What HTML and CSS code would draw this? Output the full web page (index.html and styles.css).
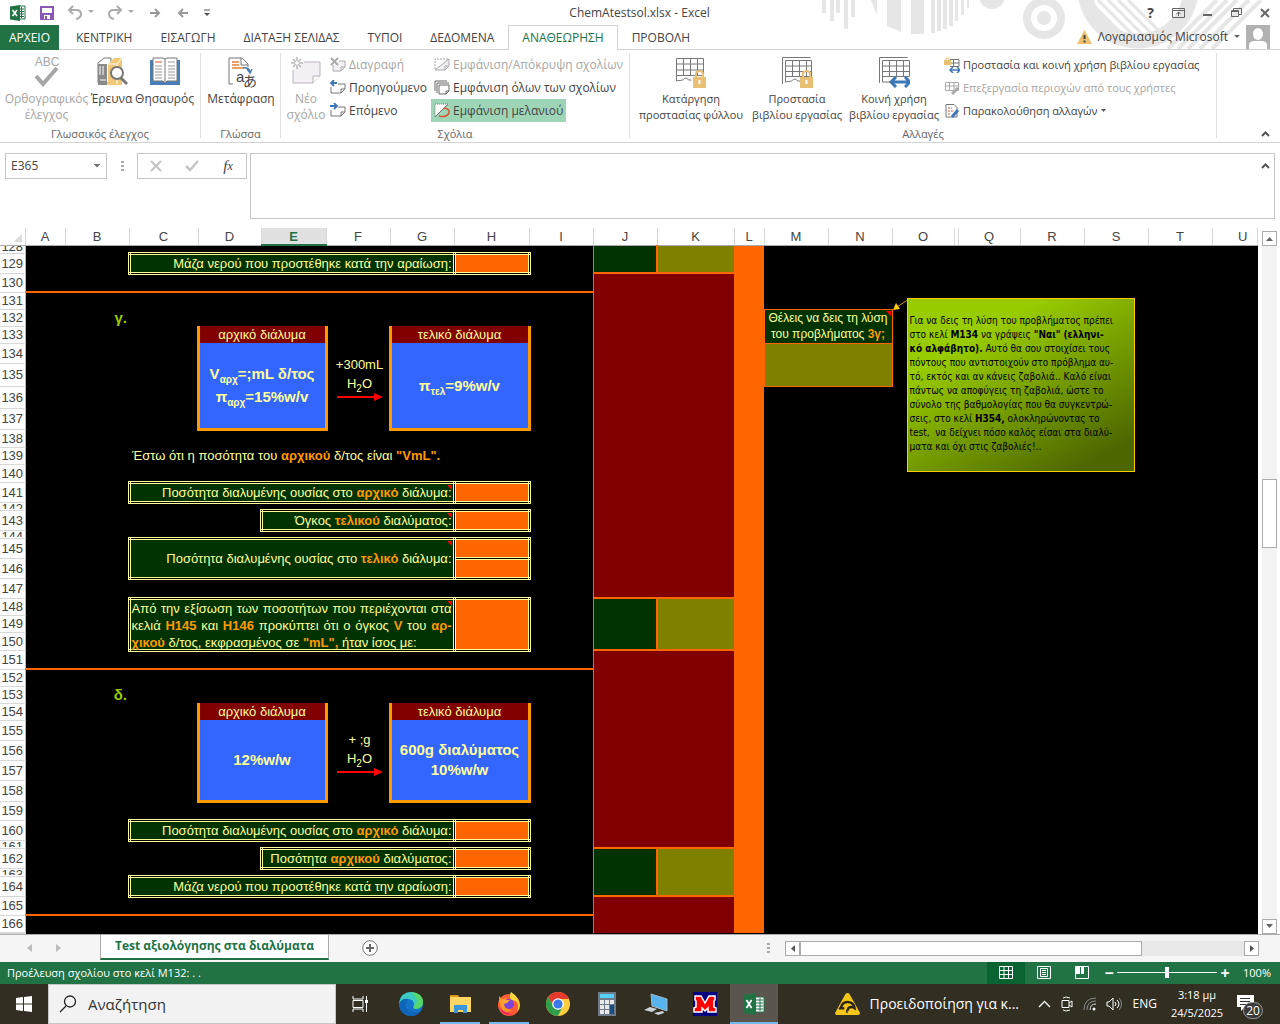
FILE: index.html
```html
<!DOCTYPE html>
<html lang="el">
<head>
    <meta charset="UTF-8">
    <meta name="viewport" content="width=device-width, initial-scale=1.0">
    <title>ChemAtestsol.xlsx - Excel</title>
    <link rel="stylesheet" href="styles.css">
</head>
<body>

    <!-- Title bar -->
    <header class="top">
        <svg class="decor" width="460" height="49" viewBox="0 0 460 49">
            <path fill="#e6e6e6" d="M2 0h4v13h-4zM10 0h4v21h-4zM16 0h4v13h-4zM24 0h4v29h-4zM31 0h4v17h-4zM51 0h6v15zM67 0h14v32l-14-6zM91 0h13v34h-13zM111 0h4v33h-4zM117 0h4v31h-4zM123 0h4v29h-4zM129 0h4v26h-4zM135 0h3v21h-3zM141 0h3v15h-3zM147 0h2v8h-2z"/>
            <circle cx="172" cy="-4" r="13" fill="#e6e6e6"/>
            <circle cx="224" cy="18" r="17" fill="none" stroke="#e6e6e6" stroke-width="8"/>
            <circle cx="224" cy="18" r="7" fill="#e6e6e6"/>
            <path d="M268 0l38 38M278 0l38 38M288 0l38 38M298 0l36 36M308 0l34 34" stroke="#e6e6e6" stroke-width="3"/>
            <circle cx="318" cy="-12" r="53" fill="none" stroke="#e6e6e6" stroke-width="15"/>
            <path d="M348 49l49-49M358 49l49-49M376 21l21-21M368 49l49-49M380 49l49-49M392 49l49-49" stroke="#e6e6e6" stroke-width="4"/>
        </svg>
        <div class="titlebar">
            <div class="quick">
                <button class="ico"><svg width="18" height="18" viewBox="0 0 18 18"><path d="M9 2h7v13H9z" fill="#fff" stroke="#217346"/><path d="M10 5h5M10 7.500h5M10 10h5M10 12.500h5M12.500 3v11" stroke="#217346"/><path d="M1 2.500L11 1v16L1 15.500z" fill="#217346"/><path d="M3.500 6l4.500 6M8 6l-4.500 6" stroke="#fff" stroke-width="1.600"/></svg></button>
                <button class="ico"><svg width="16" height="16" viewBox="0 0 16 16"><path d="M2 2h12v12H2z" fill="#fff" stroke="#8a57b5" stroke-width="2"/><path d="M2 8h12v6H2z" fill="#8a57b5"/><path d="M5 10h6v4H5z" fill="#fff"/><path d="M6 11h2v3H6z" fill="#8a57b5"/></svg></button>
                <button class="ico"><svg width="28" height="16" viewBox="0 0 28 16"><path d="M6 1L2 5l4 4M2 5h7q5 0 5 4t-5 5" fill="none" stroke="#ababab" stroke-width="2"/><path d="M21 5h6l-3 3z" fill="#ababab"/></svg></button>
                <button class="ico"><svg width="28" height="16" viewBox="0 0 28 16"><path d="M10 1l4 4-4 4M14 5H7Q2 5 2 9t5 5" fill="none" stroke="#ababab" stroke-width="2"/><path d="M21 5h6l-3 3z" fill="#ababab"/></svg></button>
                <button class="ico step-next"><svg width="12" height="12" viewBox="0 0 12 12"><path d="M1 6h9M6 2l4 4-4 4" fill="none" stroke="#999" stroke-width="2"/></svg></button>
                <button class="ico step-back"><svg width="12" height="12" viewBox="0 0 12 12"><path d="M11 6H2M6 2L2 6l4 4" fill="none" stroke="#999" stroke-width="2"/></svg></button>
                <button class="ico"><svg width="8" height="8" viewBox="0 0 8 8"><path d="M1 1h6" stroke="#555"/><path d="M1 4h6L4 7z" fill="#555"/></svg></button>
            </div>
            <div class="doc-title">ChemAtestsol.xlsx - Excel</div>
            <div class="window-buttons">
                <button class="help">?</button>
                <button><svg width="13" height="10" viewBox="0 0 13 10"><path d="M.5.5h12v9H.5zM1 2.500h11" fill="none" stroke="#666"/><path d="M6.500 8V4M4.500 6l2-2 2 2" fill="none" stroke="#666"/></svg></button>
                <button><svg width="10" height="10" viewBox="0 0 10 10"><path d="M0 7h9" stroke="#666" stroke-width="2"/></svg></button>
                <button><svg width="11" height="10" viewBox="0 0 11 10"><path d="M2.500 2V.5h8v6H8M.5 2.500h7v6h-7zM.5 3.500h7" fill="none" stroke="#666"/></svg></button>
                <button><svg width="10" height="10" viewBox="0 0 10 10"><path d="M1 1l8 8M9 1L1 9" stroke="#666" stroke-width="2"/></svg></button>
            </div>
        </div>

        <nav class="tabs">
            <button class="tab file">ΑΡΧΕΙΟ</button>
            <button class="tab">ΚΕΝΤΡΙΚΗ</button>
            <button class="tab">ΕΙΣΑΓΩΓΗ</button>
            <button class="tab">ΔΙΑΤΑΞΗ ΣΕΛΙΔΑΣ</button>
            <button class="tab">ΤΥΠΟΙ</button>
            <button class="tab">ΔΕΔΟΜΕΝΑ</button>
            <button class="tab active">ΑΝΑΘΕΩΡΗΣΗ</button>
            <button class="tab">ΠΡΟΒΟΛΗ</button>
            <button class="account">
                <svg width="15" height="14" viewBox="0 0 15 14"><path d="M7.500 0L15 14H0z" fill="#edc071"/><path d="M7.500 5v4M7.500 10.500v2" stroke="#444" stroke-width="2"/></svg>
                <span>Λογαριασμός Microsoft</span>
                <svg width="6" height="4" viewBox="0 0 6 4"><path d="M0 0h6L3 3z" fill="#666"/></svg>
                <svg class="avatar" width="24" height="24" viewBox="0 0 24 24"><path d="M0 0h24v24H0z" fill="#b1b1b1"/><ellipse cx="12" cy="9" rx="5" ry="6" fill="#fff"/><path d="M3 24v-4q0-4 6-4h6q6 0 6 4v4z" fill="#fff"/></svg>
            </button>
        </nav>
    </header>

    <!-- Ribbon -->
    <section class="ribbon">
        <div class="group group-proof">
            <div class="tools">
                <button class="big off b-spell">
                    <svg width="32" height="32" viewBox="0 0 32 32"><text x="16" y="10" text-anchor="middle" font-family="Liberation Sans" font-size="12" fill="#a6a6a6">ABC</text><path d="M5 20l7 8L26 12" fill="none" stroke="#a6a6a6" stroke-width="4"/></svg>
                    Ορθογραφικός<br>έλεγχος</button>
                <button class="big b-find">
                    <svg width="32" height="32" viewBox="0 0 32 32"><path d="M2 7l6-5h7v25H2z" fill="#fff" stroke="#7b7b7b"/><path d="M2 8h9v21H2z" fill="#8a8a8a"/><path d="M4 10v9M7 10v9M4 24h6" stroke="#fff"/><path d="M12 8l6-6h8v27H12z" fill="#f0c878"/><path d="M12 8h9l5-6M21 8v20" stroke="#fff" fill="none"/><circle cx="21" cy="17" r="6" fill="#fff" stroke="#777" stroke-width="2"/><path d="M25 22l6 6" stroke="#777" stroke-width="3"/></svg>
                    Έρευνα</button>
                <button class="big b-thes">
                    <svg width="32" height="32" viewBox="0 0 32 32"><path d="M1 4h30v25H1z" fill="#4a7ebb"/><path d="M4 2h10l2 1 2-1h10v23H18l-2 2-2-2H4z" fill="#fff" stroke="#777"/><path d="M16 3v24" stroke="#777"/><path d="M6 6h7" stroke="#d9532c"/><path d="M6 10h7M6 13h7M6 16h7M6 19h7M6 22h7M19 6h7M19 10h7M19 13h7M19 16h7M19 19h7M19 22h7" stroke="#999"/></svg>
                    Θησαυρός</button>
            </div>
            <div class="caption">Γλωσσικός έλεγχος</div>
        </div>
        <div class="group group-lang">
            <div class="tools">
                <button class="big b-lang">
                    <svg width="32" height="32" viewBox="0 0 32 32"><path d="M8 28H4V2h13l6 6v3M16 2v7h7" fill="none" stroke="#777"/><path d="M7 6h7M7 9h7M7 12h12" stroke="#e8833a" stroke-width="1.500"/><path d="M18 12q6-1 7 4M22 13l3 4 2-4" fill="none" stroke="#4a7ebb" stroke-width="1.500"/><text x="11" y="26" font-family="Liberation Sans" font-size="15" fill="#444">a</text><text x="18" y="30" font-family="Noto Sans CJK JP" font-size="14" fill="#444">あ</text></svg>
                    Μετάφραση</button>
            </div>
            <div class="caption">Γλώσσα</div>
        </div>
        <div class="group group-notes">
            <div class="tools">
                <button class="big off b-new">
                    <svg width="32" height="32" viewBox="0 0 32 32"><path d="M3 14v13h20l7-7V6H14" fill="#f3f0f5" stroke="#b9b4bb"/><path d="M23 27v-7h7" fill="#fff" stroke="#b9b4bb"/><path d="M7 1v4M7 9v4M1 7h4M9 7h4M3 3l3 3M8 8l3 3M11 3L8 6M6 8l-3 3" stroke="#bbb" stroke-width="1.500"/></svg>
                    Νέο<br>σχόλιο</button>
                <div class="stack nav">
                    <button class="small off"><svg width="16" height="16" viewBox="0 0 16 16"><path d="M3 8v6h8l4-4V4H9" fill="#f3f0f5" stroke="#aaa"/><path d="M11 14v-4h4" fill="none" stroke="#aaa"/><path d="M1 1l7 7M8 1L1 8" stroke="#aaa" stroke-width="2"/></svg>Διαγραφή</button>
                    <button class="small"><svg width="16" height="16" viewBox="0 0 16 16"><path d="M1 7v6h10l4-4V4H8" fill="none" stroke="#777"/><path d="M11 13V9h4" fill="none" stroke="#777"/><path d="M7 3H1M4 0L1 3l3 3" fill="none" stroke="#3f78b8" stroke-width="1.800"/></svg>Προηγούμενο</button>
                    <button class="small"><svg width="16" height="16" viewBox="0 0 16 16"><path d="M1 7v6h10l4-4V4H8" fill="none" stroke="#777"/><path d="M11 13V9h4" fill="none" stroke="#777"/><path d="M0 3h6M4 0l3 3-3 3" fill="none" stroke="#3f78b8" stroke-width="1.800"/></svg>Επόμενο</button>
                </div>
                <div class="stack">
                    <button class="small off"><svg width="16" height="16" viewBox="0 0 16 16"><path d="M1 12V2h14" fill="none" stroke="#aaa" stroke-dasharray="2 1"/><path d="M15 2v7l-4 4H1z" fill="#f3f0f5" stroke="#aaa"/><path d="M11 13V9h4" fill="none" stroke="#aaa"/></svg>Εμφάνιση/Απόκρυψη σχολίων</button>
                    <button class="small"><svg width="16" height="16" viewBox="0 0 16 16"><path d="M1 11V1h12M3 13V3h12M5 5h10v6l-3 3H5zM12 14v-3h3" fill="none" stroke="#666"/></svg>Εμφάνιση όλων των σχολίων</button>
                    <button class="small picked"><svg width="16" height="16" viewBox="0 0 16 16"><path d="M1 1h13L1 14z" fill="#fff" stroke="#777" stroke-dasharray="1 1"/><path d="M14 1L1 14" stroke="#666"/><path d="M10 5q6 1 5 5-3 5-10 3" fill="none" stroke="#d9532c" stroke-width="1.500"/></svg>Εμφάνιση μελανιού</button>
                </div>
            </div>
            <div class="caption">Σχόλια</div>
        </div>
        <div class="group group-changes">
            <div class="tools">
                <button class="big b-sheet">
                    <svg width="32" height="32" viewBox="0 0 32 32"><path d="M1.500 2.500h27v17h-27zM1.500 8h27M1.500 14h27M8.500 2v18M15.500 2v18M22.500 2v18M1.500 20v5l6-1q4-4 6 0h3" fill="none" stroke="#777"/><path d="M21 21v-3q0-3 3.500-3t3.500 3v3" fill="none" stroke="#e8bf73" stroke-width="2"/><path d="M18 21h13v11H18z" fill="#e8bf73"/><path d="M24.500 24v4" stroke="#fff" stroke-width="2"/></svg>
                    Κατάργηση<br>προστασίας φύλλου</button>
                <button class="big b-book">
                    <svg width="32" height="32" viewBox="0 0 32 32"><path d="M1.500 28V1.500h28M4.500 4.500h26v16h-26zM4.500 10h26M4.500 15.500h26M11.500 4v17M18.500 4v17M25.500 4v17M4.500 20v6l6-1q4-4 6 0h3" fill="none" stroke="#777"/><path d="M22 21v-3q0-3 3.500-3t3.500 3v3" fill="none" stroke="#e8bf73" stroke-width="2"/><path d="M19 21h13v11H19z" fill="#e8bf73"/><path d="M25.500 24v4" stroke="#fff" stroke-width="2"/></svg>
                    Προστασία<br>βιβλίου εργασίας</button>
                <button class="big b-share">
                    <svg width="32" height="32" viewBox="0 0 32 32"><path d="M1.500 27V1.500h28M4.500 4.500h27v16h-27zM4.500 10h27M4.500 15.500h27M11.500 4v17M18.500 4v17M25.500 4v17M4.500 20v6h8" fill="none" stroke="#777"/><path d="M14 26h17M18 21l-5 5 5 5M27 21l5 5-5 5" fill="none" stroke="#3f78b8" stroke-width="3"/></svg>
                    Κοινή χρήση<br>βιβλίου εργασίας</button>
                <div class="stack">
                    <button class="small"><svg width="16" height="16" viewBox="0 0 16 16"><path d="M6 2.500h9v7H6M6 6h9M9.500 2v8" fill="none" stroke="#777"/><path d="M0 3h7v5H0z" fill="#e8bf73"/><path d="M2 3V1h3v2" fill="none" stroke="#e8bf73"/><path d="M7 13h8M9 10l-3 3 3 3M13 10l3 3-3 3" fill="none" stroke="#3f78b8" stroke-width="1.500"/></svg>Προστασία και κοινή χρήση βιβλίου εργασίας</button>
                    <button class="small off"><svg width="16" height="16" viewBox="0 0 16 16"><path d="M1.500 2.500h13v8h-13zM1 6h13M5.500 2v8M10 2v8" fill="none" stroke="#aaa"/><path d="M8 14l6-6" stroke="#aaa" stroke-width="3"/></svg>Επεξεργασία περιοχών από τους χρήστες</button>
                    <button class="small"><svg width="16" height="16" viewBox="0 0 16 16"><path d="M2 1.500h8l3 3V14H2z" fill="#fff" stroke="#777"/><path d="M4 5h4M4 8h5M4 11h3" stroke="#d9532c" stroke-dasharray="2 1"/><path d="M8 14l6-7" stroke="#3f78b8" stroke-width="3"/></svg>Παρακολούθηση αλλαγών<svg class="drop" width="5" height="3" viewBox="0 0 5 3"><path d="M0 0h5L2.500 3z" fill="#555"/></svg></button>
                </div>
            </div>
            <div class="caption">Αλλαγές</div>
        </div>
        <button class="collapse"><svg width="9" height="6" viewBox="0 0 9 6"><path d="M1 5l3.500-3.500L8 5" fill="none" stroke="#555" stroke-width="2"/></svg></button>
    </section>

    <!-- Formula bar -->
    <section class="formula-bar">
        <select class="name-box" aria-label="Πλαίσιο ονόματος"><option>E365</option></select>
        <span class="dots"></span>
        <div class="fx-box">
            <button><svg width="12" height="12" viewBox="0 0 12 12"><path d="M1 1l10 10M11 1L1 11" stroke="#c4c4c4" stroke-width="2"/></svg></button>
            <button><svg width="14" height="12" viewBox="0 0 14 12"><path d="M1 6l4 4 8-9" fill="none" stroke="#c4c4c4" stroke-width="2.500"/></svg></button>
            <button class="fx">f<small>x</small></button>
        </div>
        <div class="formula">
            <textarea aria-label="Γραμμή τύπων"></textarea>
            <svg width="9" height="6" viewBox="0 0 9 6"><path d="M1 5l3.500-3.500L8 5" fill="none" stroke="#555" stroke-width="2"/></svg>
        </div>
    </section>

    <!-- Worksheet -->
    <main class="work">
        <table class="sheet">
            <colgroup>
                <col class="c-head"><col class="c-a"><col class="c-64"><col class="c-c"><col class="c-63"><col class="c-e">
                <col class="c-64"><col class="c-64"><col class="c-h"><col class="c-64"><col class="c-64"><col class="c-k"><col class="c-l">
                <col class="c-64"><col class="c-64"><col class="c-62"><col class="c-p"><col class="c-62"><col class="c-64"><col class="c-64"><col class="c-64"><col>
            </colgroup>
            <thead>
                <tr>
                    <th class="corner"></th><th>A</th><th>B</th><th>C</th><th>D</th><th class="current">E</th><th>F</th><th>G</th><th>H</th><th>I</th><th>J</th><th>K</th><th>L</th><th>M</th><th>N</th><th>O</th><th></th><th>Q</th><th>R</th><th>S</th><th>T</th><th class="last">U</th>
                </tr>
            </thead>
            <tbody>
                <tr class="r8"><th class="cut-top"><div>128</div></th><td colspan="4"></td><td colspan="4" class="box-end"></td><td></td>
                    <td rowspan="2" class="green score"></td><td rowspan="2" class="olive score"></td><td rowspan="40" class="stripe"></td><td colspan="9" rowspan="4"></td></tr>
                <tr class="r20"><th>129</th><td colspan="2"></td><td colspan="5" class="ask">Μάζα νερού που προστέθηκε κατά την αραίωση:</td><td class="answer"></td><td></td></tr>
                <tr class="r19"><th>130</th><td colspan="9" class="rule"></td><td colspan="2" rowspan="18" class="maroon"></td></tr>
                <tr class="r17"><th>131</th><td colspan="9"></td></tr>
                <tr class="r17"><th>132</th><td></td><td class="part">γ.</td><td colspan="7"></td>
                    <td colspan="2" rowspan="2" class="hint"><i class="mark"></i>Θέλεις να δεις τη λύση<br>του προβλήματος <b>3γ;</b></td>
                    <td colspan="7" rowspan="36" class="free">
                        <svg class="pointer" width="17" height="13" viewBox="0 0 17 13"><path d="M16 1L4 9" stroke="#c90" /><path d="M0 12l3-7 4 6z" fill="#fc0"/></svg>
                        <div class="note">Για να δεις τη λύση του προβλήματος πρέπει<br>στο κελί <b>M134</b> να γράψεις <b>"Ναι" (ελληνι-<br>κό αλφάβητο).</b> Αυτό θα σου στοιχίσει τους<br>πόντους που αντιστοιχούν στο πρόβλημα αυ-<br>τό, εκτός και αν κάνεις ζαβολιά.. Καλό είναι<br>πάντως να αποφύγεις τη ζαβολιά, ώστε το<br>σύνολο της βαθμολογίας που θα συγκεντρώ-<br>σεις, στο κελί <b>H354,</b> ολοκληρώνοντας το<br>test,&nbsp; να δείχνει πόσο καλός είσαι στα διαλύ-<br>ματα και όχι στις ζαβολιές!..</div>
                    </td></tr>
                <tr class="r17"><th>133</th><td colspan="3"></td><td colspan="2" class="jar-top">αρχικό διάλυμα</td><td></td><td colspan="2" class="jar-top">τελικό διάλυμα</td><td></td></tr>
                <tr class="r20"><th>134</th><td colspan="3" rowspan="4"></td>
                    <td colspan="2" rowspan="4" class="jar">V<sub>αρχ</sub>=;mL δ/τος<br>π<sub>αρχ</sub>=15%w/v</td>
                    <td rowspan="4" class="add">+300mL<br>H<sub>2</sub>O<svg width="46" height="9" viewBox="0 0 46 9"><path d="M0 4h38" stroke="red" stroke-width="2"/><path d="M37 0l9 4-9 4z" fill="red"/></svg></td>
                    <td colspan="2" rowspan="4" class="jar">π<sub>τελ</sub>=9%w/v</td><td rowspan="4"></td>
                    <td colspan="2" rowspan="2" class="olive framed"></td></tr>
                <tr class="r23"><th>135</th></tr>
                <tr class="r22"><th>136</th><td colspan="2" rowspan="32"></td></tr>
                <tr class="r21"><th>137</th></tr>
                <tr class="r18"><th>138</th><td colspan="9"></td></tr>
                <tr class="r17"><th>139</th><td colspan="2"></td><td colspan="7" class="say">Έστω ότι η ποσότητα του <b>αρχικού</b> δ/τος είναι <b>"VmL".</b></td></tr>
                <tr class="r18"><th>140</th><td colspan="9"></td></tr>
                <tr class="r20"><th>141</th><td colspan="2"></td><td colspan="5" class="ask"><i class="mark"></i>Ποσότητα διαλυμένης ουσίας στο <b>αρχικό</b> διάλυμα:</td><td class="answer"></td><td></td></tr>
                <tr class="r8"><th class="cut"><div>142</div></th><td colspan="9"></td></tr>
                <tr class="r20"><th>143</th><td colspan="4"></td><td colspan="3" class="ask"><i class="mark"></i>Όγκος <b>τελικού</b> διαλύματος:</td><td class="answer"></td><td></td></tr>
                <tr class="r8"><th class="cut"><div>144</div></th><td colspan="9"></td></tr>
                <tr class="r20"><th>145</th><td colspan="2" rowspan="2"></td><td colspan="5" rowspan="2" class="ask"><i class="mark"></i>Ποσότητα διαλυμένης ουσίας στο <b>τελικό</b> διάλυμα:</td><td class="answer"></td><td rowspan="2"></td></tr>
                <tr class="r20"><th>146</th><td class="answer"></td></tr>
                <tr class="r20"><th>147</th><td colspan="9"></td></tr>
                <tr class="r17"><th>148</th><td colspan="2" rowspan="3"></td>
                    <td colspan="5" rowspan="3" class="ask long"><i class="mark"></i><p>Από την εξίσωση των ποσοτήτων που περιέχονται στα</p><p>κελιά <b>H145</b> και <b>H146</b> προκύπτει ότι ο όγκος <b>V</b> του <b>αρ-</b></p><p class="end"><b>χικού</b> δ/τος, εκφρασμένος σε <b>"mL",</b> ήταν ίσος με:</p></td>
                    <td rowspan="3" class="answer"></td><td rowspan="3"></td><td rowspan="3" class="green score"></td><td rowspan="3" class="olive score"></td></tr>
                <tr class="r17"><th>149</th></tr>
                <tr class="r18"><th>150</th></tr>
                <tr class="r19"><th>151</th><td colspan="9" class="rule"></td><td colspan="2" rowspan="11" class="maroon"></td></tr>
                <tr class="r17"><th>152</th><td colspan="9"></td></tr>
                <tr class="r17"><th>153</th><td></td><td class="part">δ.</td><td colspan="7"></td></tr>
                <tr class="r17"><th>154</th><td colspan="3"></td><td colspan="2" class="jar-top">αρχικό διάλυμα</td><td></td><td colspan="2" class="jar-top">τελικό διάλυμα</td><td></td></tr>
                <tr class="r20"><th>155</th><td colspan="3" rowspan="4"></td>
                    <td colspan="2" rowspan="4" class="jar">12%w/w</td>
                    <td rowspan="4" class="add">+ ;g<br>H<sub>2</sub>O<svg width="46" height="9" viewBox="0 0 46 9"><path d="M0 4h38" stroke="red" stroke-width="2"/><path d="M37 0l9 4-9 4z" fill="red"/></svg></td>
                    <td colspan="2" rowspan="4" class="jar tight">600g διαλύματος<br>10%w/w</td><td rowspan="4"></td></tr>
                <tr class="r20"><th>156</th></tr>
                <tr class="r20"><th>157</th></tr>
                <tr class="r21"><th>158</th></tr>
                <tr class="r19"><th>159</th><td colspan="9"></td></tr>
                <tr class="r20"><th>160</th><td colspan="2"></td><td colspan="5" class="ask">Ποσότητα διαλυμένης ουσίας στο <b>αρχικό</b> διάλυμα:</td><td class="answer"></td><td></td></tr>
                <tr class="r8"><th class="cut"><div>161</div></th><td colspan="9"></td></tr>
                <tr class="r20"><th>162</th><td colspan="4"></td><td colspan="3" class="ask">Ποσότητα <b>αρχικού</b> διαλύματος:</td><td class="answer"></td><td></td>
                    <td rowspan="3" class="green score"></td><td rowspan="3" class="olive score"></td></tr>
                <tr class="r8"><th class="cut"><div>163</div></th><td colspan="9"></td></tr>
                <tr class="r20"><th>164</th><td colspan="2"></td><td colspan="5" class="ask">Μάζα νερού που προστέθηκε κατά την αραίωση:</td><td class="answer"></td><td></td></tr>
                <tr class="r19"><th>165</th><td colspan="9" class="rule"></td><td colspan="2" rowspan="3" class="maroon"></td></tr>
                <tr class="r17"><th>166</th><td colspan="9"></td></tr>
                <tr class="r1"><th></th><td colspan="9"></td></tr>
            </tbody>
        </table>
        <div class="vscroll">
            <button><svg width="7" height="4" viewBox="0 0 7 4"><path d="M0 4l3.500-4L7 4z" fill="#666"/></svg></button>
            <div class="track"><div class="thumb"></div></div>
            <button><svg width="7" height="4" viewBox="0 0 7 4"><path d="M0 0h7L3.500 4z" fill="#666"/></svg></button>
        </div>
    </main>

    <!-- Sheet tabs -->
    <section class="sheet-tabs">
        <div class="arrows">
            <button><svg width="5" height="8" viewBox="0 0 5 8"><path d="M5 0v8L0 4z" fill="#bbb"/></svg></button>
            <button><svg width="5" height="8" viewBox="0 0 5 8"><path d="M0 0v8l5-4z" fill="#bbb"/></svg></button>
        </div>
        <button class="sheet-tab">Test αξιολόγησης στα διαλύματα</button>
        <button class="add-sheet"><svg width="16" height="16" viewBox="0 0 16 16"><circle cx="8" cy="8" r="7.300" fill="#fff" stroke="#777"/><path d="M8 4v8M4 8h8" stroke="#666" stroke-width="2"/></svg></button>
        <span class="dots"></span>
        <div class="hscroll">
            <button><svg width="4" height="7" viewBox="0 0 4 7"><path d="M4 0v7L0 3.500z" fill="#555"/></svg></button>
            <div class="track"><div class="thumb"></div></div>
            <button><svg width="4" height="7" viewBox="0 0 4 7"><path d="M0 0v7l4-3.500z" fill="#555"/></svg></button>
        </div>
    </section>

    <!-- Status bar -->
    <section class="status">
        <span class="message">Προέλευση σχολίου στο κελί M132: . .</span>
        <button class="view on"><svg width="14" height="13" viewBox="0 0 14 13"><path d="M.5.5h13v12H.5zM0 4.500h14M0 8.500h14M5 0v13M9.500 0v13" fill="none" stroke="#fff"/></svg></button>
        <button class="view"><svg width="14" height="13" viewBox="0 0 14 13"><path d="M.5.5h13v12H.5zM3.500 2.500h7v8h-7zM5 4.500h4M5 6.500h4M5 8.500h4" fill="none" stroke="#fff"/></svg></button>
        <button class="view"><svg width="14" height="13" viewBox="0 0 14 13"><path d="M.5.5h13v12H.5z" fill="none" stroke="#fff"/><path d="M1 1h4v7H1zM6 1h3v7H6z" fill="#fff"/></svg></button>
        <button class="step">−</button>
        <input class="zoom" type="range" min="0" max="200" value="100" aria-label="Ζουμ">
        <button class="step">+</button>
        <span class="percent">100%</span>
    </section>

    <!-- Taskbar -->
    <footer class="taskbar">
        <button class="app start"><svg width="16" height="16" viewBox="0 0 16 16"><path d="M0 2l7-1v6.500H0zM8 1l8-1v7.500H8zM0 8.500h7V15l-7-1zM8 8.500h8V16l-8-1z" fill="#fff"/></svg></button>
        <label class="search">
            <svg width="18" height="18" viewBox="0 0 18 18"><circle cx="11" cy="6.500" r="5.500" fill="none" stroke="#222" stroke-width="1.300"/><path d="M7 11l-6 6" stroke="#222" stroke-width="1.300"/></svg>
            <input type="text" placeholder="Αναζήτηση">
        </label>
        <button class="app"><svg width="17" height="16" viewBox="0 0 17 16"><path d="M1 0v3h10V0M1 16v-3h10v3M1 4.500h10v7H1zM14.500 0v16" fill="none" stroke="#fff"/><path d="M13 4h3v3h-3z" fill="#fff"/></svg></button>
        <button class="app"><svg width="24" height="24" viewBox="0 0 24 24"><circle cx="12" cy="12" r="12" fill="#1473c8"/><path d="M0 11Q2 0 12 0q11 1 12 10 0 7-8 7-3-1-1-4 0-6-6-6-6 0-9 4z" fill="#3ccbc0"/><path d="M12 0q12 1 12 10 0 7-8 7-2-1-1-3 7-5-3-14z" fill="#56d66a"/><path d="M0 12q3-6 9-5-5 6 0 11 5 4 12 1-4 5-9 5Q1 23 0 12z" fill="#0f66b8"/></svg></button>
        <button class="app open"><svg width="23" height="20" viewBox="0 0 23 20"><path d="M1 1h8l2 3h-10z" fill="#d99a1c"/><path d="M1 3h21v15H1z" fill="#ffd664"/><path d="M5 19v-8h13v8h-4v-3H9v3z" fill="#3c96d8"/></svg></button>
        <button class="app open"><svg width="24" height="24" viewBox="0 0 24 24"><circle cx="12" cy="13" r="11" fill="#ff5a36"/><path d="M14 0q5 3 7 7 4 8-1 13Q24 8 14 8q-2-4 0-8z" fill="#ffd83a"/><path d="M2 4l3 3 5-1q-3 3 0 5-3 7 5 7-9 5-12-5-1-5-1-9z" fill="#ff9a2a"/><circle cx="12" cy="12" r="5" fill="#7b46d8"/><path d="M4 8h9l-3 3-3 1z" fill="#ffa436"/><path d="M2 15q4 10 14 7-8 0-14-7z" fill="#e2236c"/></svg></button>
        <button class="app"><svg width="24" height="24" viewBox="0 0 24 24"><circle cx="12" cy="12" r="12" fill="#ffcd41"/><path d="M2 5q4-5 10-5 8 0 11 7H12q-4 1-5 6z" fill="#e5392e"/><path d="M2 5q-5 9 2 16 3 3 8 3l5-10q-6 6-10-1z" fill="#2f9e4b"/><circle cx="12" cy="12" r="5.800" fill="#fff"/><circle cx="12" cy="12" r="4.600" fill="#3b78e7"/></svg></button>
        <button class="app"><svg width="18" height="24" viewBox="0 0 18 24"><path d="M0 0h18v24H0z" fill="#6f7b88"/><path d="M2 2h14v4H2z" fill="#55d0f5"/><path d="M2 8h4v4H2zM7 8h4v4H7zM12 8h4v4h-4zM2 13h4v4H2zM7 13h4v4H7zM2 18h4v4H2zM7 18h4v4H7z" fill="#e8e8e8"/><path d="M12 13h4v9h-4z" fill="#1b4d80"/></svg></button>
        <button class="app"><svg width="24" height="24" viewBox="0 0 24 24"><path d="M7 2l16 5v12L8 14z" fill="#58b4ee" stroke="#9fb6c4"/><path d="M0 18l6-3 7 2-5 3zM10 21l9-2 1 2-6 2z" fill="#ccd4d8"/></svg></button>
        <button class="app"><svg width="24" height="24" viewBox="0 0 24 24"><path d="M0 0h24v24H0z" fill="#000080"/><path d="M2 4h6l4 7 4-7h6v4l-1 1v6l2 1v4h-8v-4l-3 3-3-3v4H1v-4l2-1V9L2 8z" fill="red" stroke="#fff" stroke-width="1.500"/></svg></button>
        <button class="app open current-app"><svg width="22" height="22" viewBox="0 0 22 22"><path d="M11 4h10v15H11z" fill="#fff" stroke="#217346"/><path d="M13 7h7M13 10h7M13 13h7M13 16h7M17 5v13" stroke="#217346"/><path d="M0 2l13-2v22L0 20z" fill="#217346"/><path d="M3.500 7l5 8M8.500 7l-5 8" stroke="#fff" stroke-width="1.800"/></svg></button>
        <div class="tray">
            <svg width="25" height="22" viewBox="0 0 25 22"><path d="M12.500 0q1.500 0 2 1L25 20q0 2-2 2H2q-2 0-2-2L10.500 1q.5-1 2-1z" fill="#f5c518"/><path d="M6 15q1-6 6.500-6 6 0 7 6-3-2-6 0-2 4-1 4M4 16q3-2 5 0" fill="none" stroke="#2c2516" stroke-width="2.500"/></svg>
            <span class="alert">Προειδοποίηση για κ...</span>
            <svg width="13" height="8" viewBox="0 0 13 8"><path d="M1 7l5.500-5.500L12 7" fill="none" stroke="#fff" stroke-width="1.300"/></svg>
            <svg width="12" height="16" viewBox="0 0 12 16"><path d="M1 4.500h7v7H1zM8 7l3-2v6L8 9M2 2q3-2 7 0M2 14q3 2 7 0" fill="none" stroke="#fff"/></svg>
            <svg width="13" height="14" viewBox="0 0 13 14"><path d="M1 13Q1 1 13 1M4 13q0-9 9-9" fill="none" stroke="#888"/><path d="M7 13q0-6 6-6" fill="none" stroke="#ddd"/><circle cx="11" cy="12" r="1.500" fill="#fff"/></svg>
            <svg width="17" height="14" viewBox="0 0 17 14"><path d="M1 5h2l4-4v12L3 9H1zM9 5q2 2 0 4M11 3q4 4 0 8" fill="none" stroke="#fff"/><path d="M13 1q5 6 0 12" fill="none" stroke="#888"/></svg>
            <span class="lang">ENG</span>
            <div class="clock">3:18 μμ<br>24/5/2025</div>
            <button class="notify">
                <svg width="17" height="17" viewBox="0 0 17 17"><path d="M0 0h17v12H8l-4 4v-4H0z" fill="#fff"/><path d="M3 3.500h10M3 6.500h10M3 9.500h7" stroke="#333"/></svg>
                <span class="count">20</span>
            </button>
        </div>
    </footer>

</body>
</html>
```
FILE: styles.css
```css
* {
    box-sizing: border-box;
}

body {
    margin: 0;
    min-height: 100vh;
    display: flex;
    flex-direction: column;
    background: #fff;
    color: #444;
    font-family: "Open Sans", "Noto Sans", sans-serif;
    font-size: 12px;
    line-height: 16px;
    overflow-x: hidden;
}

button {
    display: flex;
    align-items: center;
    justify-content: center;
    flex: none;
    margin: 0;
    padding: 0;
    border: 0;
    background: none;
    color: inherit;
    font: inherit;
}

svg {
    display: block;
    flex: none;
}

p {
    margin: 0;
}

/* title bar and tabs */
.top {
    position: relative;
}

.decor {
    position: absolute;
    top: 0;
    right: 0;
}

.titlebar {
    position: relative;
    display: flex;
    justify-content: space-between;
    align-items: center;
    height: 25px;
}

.quick, .window-buttons {
    display: flex;
    align-items: center;
    flex: 1;
}

.quick {
    padding-left: 9px;
    gap: 12px;
}

.step-next, .step-back {
    margin-left: 2px;
    margin-right: 2px;
}

.window-buttons {
    justify-content: flex-end;
    padding-right: 10px;
    gap: 18px;
}

.help {
    font-size: 14px;
    font-weight: bold;
}

.tabs {
    position: relative;
    display: flex;
    height: 25px;
    border-bottom: 1px solid #d4d4d4;
}

.tab {
    padding: 0 14px;
    height: 25px;
}

.tab.file {
    width: 59px;
    margin-right: 3px;
    padding: 0;
    background: #217346;
    color: #fff;
}

.tab.active {
    padding: 0 13px;
    background: #fff;
    color: #217346;
    border: 1px solid #d4d4d4;
    border-bottom: 0;
}

.account {
    margin-left: auto;
    margin-right: 10px;
    gap: 6px;
}

/* ribbon */
.ribbon {
    display: flex;
    position: relative;
    height: 93px;
    border-bottom: 1px solid #d4d4d4;
}

.group {
    flex: none;
    height: 85px;
    margin-top: 3px;
    border-right: 1px solid #e1e1e1;
}

.group-proof { width: 201px; }
.group-lang { width: 80px; }
.group-notes { width: 349px; }
.group-changes { width: 587px; }

.tools {
    display: flex;
    height: 73px;
    padding-left: 4px;
}

.group-changes .tools {
    padding-left: 5px;
    font-size: 11px;
}

.caption {
    text-align: center;
    color: #666;
    font-size: 11px;
    line-height: 16px;
}

.big {
    flex-direction: column;
    justify-content: flex-start;
    white-space: nowrap;
    padding-top: 3px;
}

.big svg {
    margin-bottom: 3px;
}

.off {
    color: #a6a6a6;
}

.b-spell { width: 85px; }
.b-find { width: 45px; }
.b-thes { width: 61px; }
.b-lang { width: 72px; }
.b-new { width: 42px; }
.b-sheet { width: 112px; }
.b-book { width: 100px; }
.b-share { width: 94px; }

.stack {
    display: flex;
    flex-direction: column;
    align-items: flex-start;
}

.stack.nav {
    width: 104px;
}

.small {
    height: 23px;
    padding: 0 3px;
    gap: 3px;
    white-space: nowrap;
}

.picked {
    background: #9fd5b7;
}

.collapse {
    position: absolute;
    right: 10px;
    bottom: 5px;
}

/* formula bar */
.formula-bar {
    display: flex;
    align-items: flex-start;
    height: 85px;
    padding: 10px 5px 0 5px;
}

.name-box {
    width: 102px;
    height: 26px;
    padding: 0 5px;
    border: 1px solid #c6c6c6;
    border-radius: 0;
    color: #444;
    font: inherit;
    appearance: none;
    background: linear-gradient(to bottom right, #777 50%, transparent 50%) no-repeat right 5px top 10px / 4px 4px,
                linear-gradient(to bottom left, #777 50%, transparent 50%) no-repeat right 9px top 10px / 4px 4px;
}

.dots {
    width: 3px;
    height: 11px;
    background: repeating-linear-gradient(#aaa 0 2px, transparent 2px 4px);
}

.formula-bar .dots {
    margin: 8px 13px 0 14px;
}

.fx-box {
    display: flex;
    width: 110px;
    height: 26px;
    margin-right: 3px;
    border: 1px solid #c6c6c6;
}

.fx-box button {
    width: 36px;
}

.fx {
    font: italic 15px "Liberation Serif", serif;
}

.fx small {
    font-size: 12px;
}

.formula {
    display: flex;
    flex: 1;
    height: 66px;
    padding: 9px 4px 0 0;
    border: 1px solid #c6c6c6;
}

.formula textarea {
    flex: 1;
    height: 50px;
    padding: 0 4px;
    border: 0;
    resize: none;
    font: inherit;
}

/* worksheet */
.work {
    display: flex;
    padding-right: 3px;
    gap: 4px;
}

.sheet {
    flex: 1;
    width: 0;
    table-layout: fixed;
    border-collapse: collapse;
    background: #000;
    color: #ffff99;
    font-family: "Liberation Sans", Arial, sans-serif;
    font-size: 13px;
    line-height: 15px;
}

.sheet th, .sheet td {
    padding: 0;
    position: relative;
    white-space: nowrap;
}

.sheet th {
    background: #fff;
    color: #444;
    font-weight: normal;
    border-bottom: 1px solid #d8d8d8;
    border-right: 1px solid #bbb;
}

.sheet thead th {
    height: 17px;
    border-right: 1px solid #d8d8d8;
    border-bottom: 1px solid #ababab;
}

.sheet thead .current {
    background: #e1e1e1;
    color: #217346;
    font-weight: bold;
    border-bottom: 2px solid #217346;
}

.sheet thead .last {
    padding-left: 16px;
}

.sheet thead .corner {
    background: linear-gradient(to bottom right, transparent 50%, #ddd 50%) no-repeat right 3px bottom 3px / 9px 9px #fff;
}

.c-head { width: 25px; }
.c-a { width: 40px; }
.c-c { width: 69px; }
.c-e { width: 65px; }
.c-h { width: 75px; }
.c-k { width: 77px; }
.c-l { width: 30px; }
.c-p { width: 4px; }
.c-62 { width: 62px; }
.c-63 { width: 63px; }
.c-64 { width: 64px; }

.r1 { height: 1px; }
.r8 { height: 8px; }
.r17 { height: 17px; }
.r18 { height: 18px; }
.r19 { height: 19px; }
.r20 { height: 20px; }
.r21 { height: 21px; }
.r22 { height: 22px; }
.r23 { height: 23px; }

/* rows too short for their number */
.cut div, .cut-top div {
    height: 6px;
    line-height: 11px;
    overflow: hidden;
}

.cut-top div {
    display: flex;
    align-items: flex-end;
    justify-content: center;
}

.sheet b {
    color: #ff9900;
}

.green { background: #003300; }
.olive { background: #808000; }
.stripe { background: #ff6600; }

.maroon {
    background: #800000;
    border-left: 1px solid #ff6600;
}

.score {
    border-bottom: 2px solid #ff6600;
}

tr + tr .score {
    border-top: 2px solid #ff6600;
}

.green.score {
    border-left: 1px solid #ff6600;
    border-right: 2px solid #ff6600;
}

.framed {
    border: 1px solid #ff6600;
}

.hint {
    background: #003300;
    border: 1px solid #ff6600;
    text-align: center;
    font-size: 12px;
    line-height: 16px;
}

.rule {
    border-bottom: 2px solid #ff6600;
}

.box-end {
    border-top: 1px solid #ffff99;
}

.ask {
    background: #003300;
    border: 3px double #ffff99;
    text-align: right;
}

.sheet .ask {
    padding-right: 1px;
}

.answer {
    background: #ff6600;
    border: 3px double #ffff99;
}

.long {
    line-height: 17px;
    text-align: left;
}

.sheet .long {
    padding-left: 1px;
}

.long p {
    text-align-last: justify;
}

.long .end {
    height: 15px;
    text-align-last: left;
}

.part {
    color: #99cc00;
    font-size: 15px;
    font-weight: bold;
    text-align: right;
}

.sheet .part {
    padding-right: 2px;
}

.sheet .say {
    padding-left: 3px;
}

.jar-top {
    background: #800000;
    border-left: 3px solid #ff9900;
    border-right: 3px solid #ff9900;
    text-align: center;
}

.jar {
    background: #3366ff;
    border: 3px solid #ff9900;
    border-top: 0;
    text-align: center;
    font-size: 15px;
    font-weight: bold;
    line-height: 23px;
}

.jar.tight {
    line-height: 20px;
}

.sheet sub {
    font-size: 10px;
    line-height: 0;
}

.add {
    text-align: center;
    line-height: 19px;
}

.sheet .add {
    padding-left: 3px;
    padding-bottom: 15px;
}

.add svg {
    margin: 0 auto;
}

.mark {
    position: absolute;
    z-index: 1;
    top: 1px;
    right: 1px;
    border-top: 5px solid red;
    border-left: 5px solid transparent;
}

.pointer {
    position: absolute;
    left: 0;
    top: -11px;
}

.note {
    position: absolute;
    left: 14px;
    top: -11px;
    width: 228px;
    height: 174px;
    padding: 15px 2px;
    border: 1px solid #ffcc00;
    background: linear-gradient(150deg, #99cc00 25%, #4c6600 90%);
    color: #000;
    font-family: "DejaVu Sans Condensed", "DejaVu Sans", sans-serif;
    font-size: 10px;
    line-height: 14px;
}

.note b {
    color: #000;
}

/* scroll bars */
.vscroll {
    display: flex;
    flex-direction: column;
    width: 15px;
    margin-top: 3px;
}

.vscroll button, .hscroll button {
    width: 15px;
    height: 15px;
    border: 1px solid #ababab;
    background: #fff;
}

.vscroll .track {
    flex: 1;
    padding-top: 233px;
    background: #f3f3f3;
}

.vscroll .thumb {
    height: 69px;
    border: 1px solid #ababab;
    background: #fff;
}

.hscroll {
    display: flex;
    width: 474px;
    margin-right: 21px;
}

.hscroll .track {
    flex: 1;
    background: #e8e8e8;
}

.hscroll .thumb {
    width: 77%;
    height: 15px;
    border: 1px solid #ababab;
    background: #fff;
}

/* sheet tabs */
.sheet-tabs {
    display: flex;
    align-items: center;
    height: 28px;
    border-top: 1px solid #ababab;
    background: #f5f5f5;
}

.arrows {
    display: flex;
    gap: 24px;
    width: 100px;
    padding-left: 27px;
}

.sheet-tab {
    align-self: flex-start;
    height: 25px;
    padding: 0 14px;
    border: 1px solid #ababab;
    border-top: 0;
    border-bottom: 2px solid #217346;
    background: #fff;
    color: #217346;
    font-weight: bold;
    white-space: nowrap;
}

.add-sheet {
    margin-left: 33px;
}

.sheet-tabs .dots {
    margin-left: auto;
    margin-right: 15px;
}

/* status bar */
.status {
    display: flex;
    align-items: center;
    height: 22px;
    padding: 0 9px 0 7px;
    background: #217346;
    color: #fff;
    font-size: 11px;
}

.message {
    margin-right: auto;
}

.view {
    width: 38px;
    height: 22px;
}

.view.on {
    background: #0a6332;
}

.step {
    width: 12px;
    font-size: 16px;
    font-weight: bold;
}

.view + .step {
    margin-left: 2px;
}

.zoom {
    width: 100px;
    height: 12px;
    margin: 0 2px;
    appearance: none;
    background: linear-gradient(#fff, #fff) no-repeat center / 100% 1px;
}

.zoom::-webkit-slider-thumb {
    appearance: none;
    width: 4px;
    height: 11px;
    background: #fff;
}

.percent {
    width: 40px;
    text-align: right;
}

/* taskbar */
.taskbar {
    display: flex;
    height: 40px;
    background: #332e22;
    color: #fff;
}

.app {
    width: 48px;
    height: 40px;
    margin-right: 1px;
}

.app.start {
    margin-right: 0;
}

.search {
    display: flex;
    align-items: center;
    flex: none;
    width: 288px;
    padding-left: 10px;
    gap: 9px;
    border: 1px solid #c8c8c8;
    background: #f2f2f2;
}

.search input {
    width: 200px;
    border: 0;
    background: none;
    font: inherit;
    font-size: 15px;
}

.search input::placeholder {
    color: #333;
}

.search + .app {
    margin-right: 3px;
}

.open {
    background: linear-gradient(#76b9ed, #76b9ed) no-repeat center bottom / 40px 2px;
}

.current-app {
    background: linear-gradient(#76b9ed, #76b9ed) no-repeat center bottom / 48px 2px #5a564d;
}

.tray {
    display: flex;
    align-items: center;
    margin-left: auto;
    padding-right: 17px;
    gap: 10px;
    white-space: nowrap;
}

.alert {
    width: 158px;
    font-size: 14px;
}

.clock {
    width: 60px;
    font-size: 11px;
    line-height: 18px;
    text-align: center;
}

.notify {
    position: relative;
    width: 26px;
    height: 30px;
    justify-content: flex-start;
}

.count {
    position: absolute;
    right: 0;
    bottom: 0;
    width: 20px;
    height: 17px;
    border: 1px solid #999;
    border-radius: 9px;
    background: #3c3a36;
    font-size: 12px;
    line-height: 15px;
    text-align: center;
}
```
